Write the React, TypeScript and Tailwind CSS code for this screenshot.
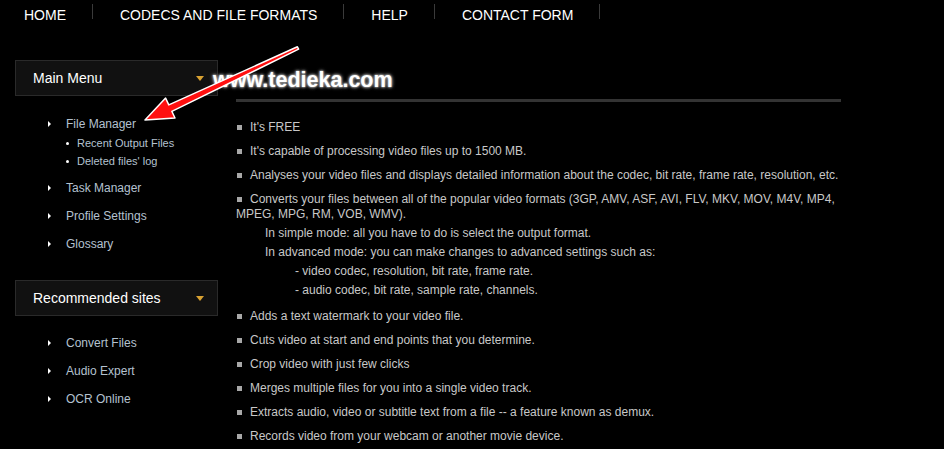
import React from "react"

const navItems = ["HOME", "CODECS AND FILE FORMATS", "HELP", "CONTACT FORM"]

const features: { text: string; sub?: boolean }[] = [
    { text: "It's FREE" },
    { text: "It's capable of processing video files up to 1500 MB." },
    { text: "Analyses your video files and displays detailed information about the codec, bit rate, frame rate, resolution, etc." },
    { text: "Converts your files between all of the popular video formats (3GP, AMV, ASF, AVI, FLV, MKV, MOV, M4V, MP4, MPEG, MPG, RM, VOB, WMV).", sub: true },
    { text: "Adds a text watermark to your video file." },
    { text: "Cuts video at start and end points that you determine." },
    { text: "Crop video with just few clicks" },
    { text: "Merges multiple files for you into a single video track." },
    { text: "Extracts audio, video or subtitle text from a file -- a feature known as demux." },
    { text: "Records video from your webcam or another movie device." },
]

const BoxHeader = ({ title }: { title: string }) => (
    <div className="h-[36px] border border-[#2a2a2a] bg-[#111111] flex items-center justify-between pl-[17px] pr-[13px]">
        <span className="text-[14px] text-white">{title}</span>
        <span className="w-0 h-0 border-l-[4px] border-r-[4px] border-t-[5px] border-l-transparent border-r-transparent border-t-[#d9a232]"></span>
    </div>
)

const SideLink = ({ label, children }: { label: string; children?: React.ReactNode }) => (
    <li className="mb-[8px]">
        <div className="flex items-center h-[20px]">
            <span className="w-0 h-0 border-t-[3px] border-b-[3px] border-l-[3px] border-t-transparent border-b-transparent border-l-white"></span>
            <span className="ml-[15px] text-[12px] text-[#b4c2d0]">{label}</span>
        </div>
        {children}
    </li>
)

const SubLink = ({ label }: { label: string }) => (
    <li className="flex items-center h-[18px] pl-[18px]">
        <span className="w-[3px] h-[3px] rounded-full bg-white"></span>
        <span className="ml-[8px] text-[11px] text-[#b4c2d0]">{label}</span>
    </li>
)

const App = () => {
    return (
        <div className="relative min-h-screen bg-black font-['Liberation_Sans',Arial,sans-serif] overflow-hidden">
            {/* top navigation */}
            <nav className="flex h-[30px]">
                {navItems.map((item, i) => (
                    <React.Fragment key={item}>
                        <a className={`${i === 0 ? "pl-[24px]" : "pl-[27px]"} pr-[26px] h-[30px] flex items-center text-[14px] text-white`}>{item}</a>
                        <span className="w-px h-[15px] mt-[4px] bg-[#3a3a3a]"></span>
                    </React.Fragment>
                ))}
            </nav>

            <div className="flex pt-[30px]">
                {/* sidebar */}
                <aside className="ml-[15px] w-[203px] shrink-0">
                    <BoxHeader title="Main Menu" />
                    <ul className="pt-[18px] pl-[33px]">
                        <SideLink label="File Manager">
                            <ul className="mb-[2px]">
                                <SubLink label="Recent Output Files" />
                                <SubLink label="Deleted files' log" />
                            </ul>
                        </SideLink>
                        <SideLink label="Task Manager" />
                        <SideLink label="Profile Settings" />
                        <SideLink label="Glossary" />
                    </ul>
                    <div className="h-[18px]"></div>
                    <BoxHeader title="Recommended sites" />
                    <ul className="pt-[17px] pl-[33px]">
                        <SideLink label="Convert Files" />
                        <SideLink label="Audio Expert" />
                        <SideLink label="OCR Online" />
                    </ul>
                </aside>

                {/* content */}
                <main className="ml-[18px] w-[605px]">
                    <div className="h-[42px] border-b-[3px] border-[#333333]"></div>
                    <ul className="mt-[18px] text-[12px] text-[#c8c8c8]">
                        {features.map((f) => (
                            <li key={f.text} className="mb-[9px] leading-[15px]">
                                <span className="inline-block w-[5px] h-[5px] bg-[#a8a8a8] mr-[8px] ml-px align-[1px]"></span>
                                {f.text}
                                {f.sub && (
                                    <div className="leading-[19px] mt-[2px]">
                                        <div className="pl-[29px]">In simple mode: all you have to do is select the output format.</div>
                                        <div className="pl-[29px]">In advanced mode: you can make changes to advanced settings such as:</div>
                                        <div className="pl-[59px]">- video codec, resolution, bit rate, frame rate.</div>
                                        <div className="pl-[59px]">- audio codec, bit rate, sample rate, channels.</div>
                                    </div>
                                )}
                            </li>
                        ))}
                    </ul>
                </main>
            </div>

            {/* watermark overlay */}
            <div className="absolute left-[213px] top-[70px] text-[21.5px] leading-none font-bold text-white [text-shadow:0_0_2px_#999,0_0_2px_#999,0_0_3px_#888,0_0_4px_#666,0_0_5px_#444]">
                www.tedieka.com
            </div>

            {/* annotation arrow */}
            <svg className="absolute left-0 top-0 pointer-events-none" width="944" height="449" viewBox="0 0 944 449">
                <polygon
                    points="145,120 175,118 171.8,111.3 298.6,49.2 297.4,46.8 168.8,104.9 165.6,98.1"
                    fill="#ff1010"
                    stroke="#ffffff"
                    strokeWidth="1.5"
                    strokeLinejoin="round"
                />
            </svg>
        </div>
    )
}

export default App
